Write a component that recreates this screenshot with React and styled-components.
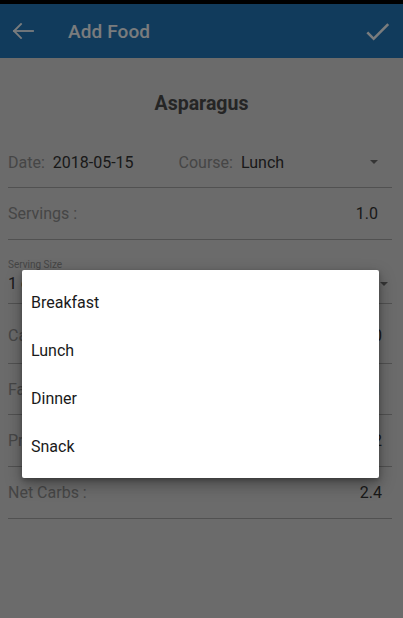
import React from 'react';
import styled, { createGlobalStyle } from 'styled-components';

const GlobalStyle = createGlobalStyle`
  html, body {
    margin: 0;
    padding: 0;
    background: #d6d6d6;
  }

  body {
    font-family: Roboto, "Noto Sans", "Liberation Sans", sans-serif;
  }
`;

const Screen = styled.div`
  position: relative;
  width: 403px;
  height: 618px;
  overflow: hidden;
  background: #d6d6d6;
`;

const StatusBar = styled.div`
  height: 4px;
  background: #000;
`;

const Toolbar = styled.header`
  display: flex;
  align-items: center;
  height: 54px;
  padding: 0 10px 0 12px;
  background: #2277b9;
  color: #f4f8fb;
`;

const ToolbarTitle = styled.h1`
  flex: 1;
  margin: 0 0 0 34px;
  font-size: 19px;
  font-weight: 500;
  letter-spacing: 0.1px;
`;

const IconButton = styled.span`
  display: flex;
  align-items: center;
  justify-content: center;
`;

const FoodName = styled.h2`
  box-sizing: border-box;
  height: 72px;
  margin: 0;
  padding-top: 20px;
  line-height: 52px;
  text-align: center;
  font-size: 19.5px;
  font-weight: 700;
  color: #4a4a4a;
`;

const Form = styled.div`
  padding: 0 11px 0 8px;
`;

const Row = styled.div`
  box-sizing: border-box;
  display: flex;
  align-items: center;
  height: ${(p) => p.$height}px;
  padding-top: ${(p) => p.$offset || 0}px;
  border-bottom: 1px solid #a3a3a3;
  font-size: 16px;
`;

const Label = styled.span`
  color: #8c8c8c;
  margin-right: ${(p) => p.$gap || 0}px;
`;

const Value = styled.span`
  color: #333;
`;

const Spacer = styled.span`
  flex: 1;
`;

const RightValue = styled.span`
  color: #333;
  margin-right: ${(p) => p.$inset}px;
`;

const Caret = styled.span`
  width: 0;
  height: 0;
  border-left: 4px solid transparent;
  border-right: 4px solid transparent;
  border-top: 4px solid #6a6a6a;
  margin-right: ${(p) => p.$inset}px;
`;

const SpinnerField = styled.div`
  box-sizing: border-box;
  height: 64px;
  padding-top: 19px;
  border-bottom: 1px solid #a3a3a3;
`;

const SmallLabel = styled.div`
  font-size: 10px;
  line-height: 12px;
  color: #8c8c8c;
`;

const SpinnerRow = styled.div`
  display: flex;
  align-items: center;
  margin-top: 3px;
  font-size: 16px;
  line-height: 20px;
  color: #333;
`;

const Scrim = styled.div`
  position: absolute;
  inset: 0;
  background: rgba(0, 0, 0, 0.5);
`;

const Menu = styled.ul`
  position: absolute;
  left: 22px;
  top: 270px;
  width: 357px;
  margin: 0;
  padding: 8px 0;
  list-style: none;
  background: #fff;
  border-radius: 2px;
  box-shadow: 0 6px 16px rgba(0, 0, 0, 0.35), 0 2px 4px rgba(0, 0, 0, 0.25);
`;

const MenuItem = styled.li`
  display: flex;
  align-items: center;
  height: 48px;
  padding-left: 9px;
  font-size: 16px;
  color: #1a1a1a;
`;

const BackIcon = () => (
  <svg width="22" height="16" viewBox="0 0 22 16" fill="none" stroke="currentColor" strokeWidth="1.8" strokeLinecap="square">
    <path d="M2 8H21" />
    <path d="M9 1L2 8L9 15" />
  </svg>
);

const CheckIcon = () => (
  <svg width="31" height="31" viewBox="0 0 24 24" fill="currentColor">
    <path d="M9 16.17L4.83 12l-1.42 1.41L9 19 21 7l-1.41-1.41z" />
  </svg>
);

const courses = ['Breakfast', 'Lunch', 'Dinner', 'Snack'];

const nutrients = [
  { label: 'Calories :', value: '20', height: 60, offset: 4 },
  { label: 'Fat :', value: '0.1', height: 51 },
  { label: 'Protein :', value: '2.2', height: 52 },
  { label: 'Net Carbs :', value: '2.4', height: 52 },
];

export default function App() {
  return (
    <Screen>
      <GlobalStyle />
      <StatusBar />
      <Toolbar>
        <IconButton><BackIcon /></IconButton>
        <ToolbarTitle>Add Food</ToolbarTitle>
        <IconButton><CheckIcon /></IconButton>
      </Toolbar>

      <FoodName>Asparagus</FoodName>

      <Form>
        <Row $height={58} $offset={7}>
          <Label $gap={8}>Date:</Label>
          <Value>2018-05-15</Value>
          <Label $gap={8} style={{ marginLeft: 45 }}>Course:</Label>
          <Value>Lunch</Value>
          <Spacer />
          <Caret $inset={14} />
        </Row>
        <Row $height={52}>
          <Label>Servings :</Label>
          <Spacer />
          <RightValue $inset={14}>1.0</RightValue>
        </Row>
        <SpinnerField>
          <SmallLabel>Serving Size</SmallLabel>
          <SpinnerRow>
            <span>1 cup</span>
            <Spacer />
            <Caret $inset={4} />
          </SpinnerRow>
        </SpinnerField>
        {nutrients.map((n) => (
          <Row key={n.label} $height={n.height} $offset={n.offset}>
            <Label>{n.label}</Label>
            <Spacer />
            <RightValue $inset={10}>{n.value}</RightValue>
          </Row>
        ))}
      </Form>

      <Scrim />
      <Menu>
        {courses.map((c) => <MenuItem key={c}>{c}</MenuItem>)}
      </Menu>
    </Screen>
  );
}
